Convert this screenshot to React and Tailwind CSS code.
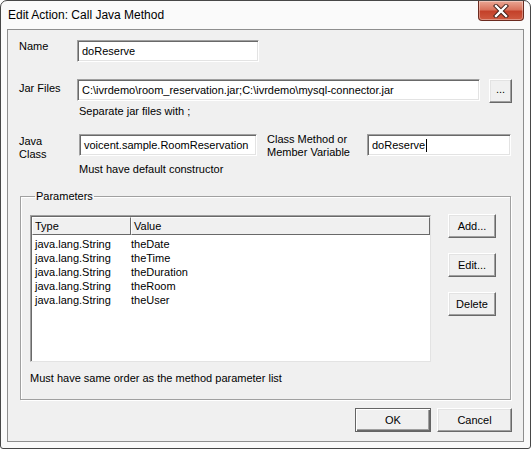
const ui = "font-['Liberation_Sans',Arial,sans-serif] text-[11px] leading-[13px] text-black";

function Field({ className = "", children }) {
  return (
    <div className={`flex items-center h-[22px] bg-white pl-[4px] border border-t-[#a0a0a0] border-l-[#a0a0a0] border-b-white border-r-white shadow-[inset_1px_1px_0_#696969,inset_-1px_-1px_0_#e3e3e3] whitespace-nowrap overflow-hidden ${className}`}>
      {children}
    </div>
  );
}

function Btn({ className = "", children, primary }) {
  return (
    <button
      className={`h-[24px] flex items-center justify-center bg-[#f0f0f0] ${
        primary
          ? "border border-[#646464] shadow-[inset_1px_1px_0_#fff,inset_-1px_-1px_0_#696969,inset_-2px_-2px_0_#a0a0a0]"
          : "border border-t-white border-l-white border-b-[#696969] border-r-[#696969] shadow-[inset_-1px_-1px_0_#a0a0a0,inset_1px_1px_0_#e3e3e3]"
      } ${className}`}
    >
      {children}
    </button>
  );
}

const params = [
  ["java.lang.String", "theDate"],
  ["java.lang.String", "theTime"],
  ["java.lang.String", "theDuration"],
  ["java.lang.String", "theRoom"],
  ["java.lang.String", "theUser"],
];

function CloseButton() {
  return (
    <div className="w-[46px] h-[20px] rounded-b-[4px] border border-t-0 border-[#6b2a1f] bg-[linear-gradient(#eaa794_0%,#d9735d_45%,#c4412a_55%,#cf5a40_100%)] shadow-[inset_0_0_0_1px_rgba(255,255,255,0.35)] flex items-center justify-center">
      <svg width="16" height="14" viewBox="0 0 16 14">
        <path d="M3 2 L13 12 M13 2 L3 12" stroke="#3a1a14" strokeWidth="4.2" strokeLinecap="square" />
        <path d="M3 2 L13 12 M13 2 L3 12" stroke="#fff" strokeWidth="2.4" strokeLinecap="square" />
      </svg>
    </div>
  );
}

export default function App() {
  return (
    <div className={`w-[531px] h-[449px] flex flex-col bg-[#fafafa] border border-[#474747] rounded-t-[7px] rounded-b-[3px] px-[6px] pb-[6px] ${ui}`}>
      <div className="h-[28px] flex items-start justify-between -mx-[6px] pl-[7px] pr-[6px] shrink-0">
        <span className="mt-[7px] text-[12px] leading-[14px]">Edit Action: Call Java Method</span>
        <CloseButton />
      </div>

      <div className="flex-1 flex flex-col bg-[#f0f0f0] border border-[#8e8e8e] pl-[11px] pr-[11px]">
        {/* Name */}
        <div className="flex items-start h-[22px] mt-[10px]">
          <span className="w-[58px] mt-[0px]">Name</span>
          <Field className="w-[182px]">doReserve</Field>
        </div>

        {/* Jar files */}
        <div className="flex items-start h-[22px] mt-[17px]">
          <span className="w-[58px] mt-[3px]">Jar Files</span>
          <Field className="w-[403px]">C:\ivrdemo\room_reservation.jar;C:\ivrdemo\mysql-connector.jar</Field>
          <Btn className="w-[23px] ml-[9px] h-[22px] pb-[4px]">...</Btn>
        </div>
        <span className="ml-[60px] mt-[4px]">Separate jar files with ;</span>

        {/* Java class */}
        <div className="flex items-start h-[22px] mt-[16px]">
          <span className="w-[60px] mt-[1px]">Java<br />Class</span>
          <Field className="w-[178px]">voicent.sample.RoomReservation</Field>
          <span className="w-[100px] ml-[10px] -mt-[1px]">Class Method or<br />Member Variable</span>
          <Field className="w-[144px]">
            doReserve<span className="inline-block w-px h-[13px] bg-black ml-[1px]" />
          </Field>
        </div>
        <span className="ml-[60px] mt-[7px]">Must have default constructor</span>

        {/* Parameters group */}
        <fieldset className="mt-[14px] ml-[1px] w-[491px] border border-[#a0a0a0] shadow-[inset_1px_1px_0_#fff,1px_1px_0_#fff] pl-[9px] pr-[14px] pb-[14px]">
          <legend className="ml-[5px] px-[1px]">Parameters</legend>
          <div className="flex items-start mt-[12px]">
            <div className="w-[401px] h-[147px] bg-white border border-t-[#a0a0a0] border-l-[#a0a0a0] border-b-[#e3e3e3] border-r-[#e3e3e3] shadow-[inset_1px_1px_0_#696969] pl-[1px] pt-[1px]">
              <div className="flex h-[18px]">
                <div className="w-[99px] flex items-center pl-[2px] bg-[#f0f0f0] border border-t-white border-l-white border-b-[#696969] border-r-[#696969]">Type</div>
                <div className="w-[299px] flex items-center pl-[2px] bg-[#f0f0f0] border border-t-white border-l-white border-b-[#696969] border-r-[#696969]">Value</div>
              </div>
              <div className="pt-[2px]">
                {params.map(([type, value]) => (
                  <div key={value} className="flex h-[14px] items-center">
                    <span className="w-[99px] pl-[3px]">{type}</span>
                    <span>{value}</span>
                  </div>
                ))}
              </div>
            </div>
            <div className="flex flex-col gap-[15px] ml-[17px] -mt-[1px]">
              <Btn className="w-[48px]">Add...</Btn>
              <Btn className="w-[48px]">Edit...</Btn>
              <Btn className="w-[48px]">Delete</Btn>
            </div>
          </div>
          <div className="mt-[10px]">Must have same order as the method parameter list</div>
        </fieldset>

        {/* Footer */}
        <div className="flex justify-end gap-[6px] mt-[8px]">
          <Btn primary className="w-[76px]">OK</Btn>
          <Btn className="w-[75px]">Cancel</Btn>
        </div>
      </div>
    </div>
  );
}
